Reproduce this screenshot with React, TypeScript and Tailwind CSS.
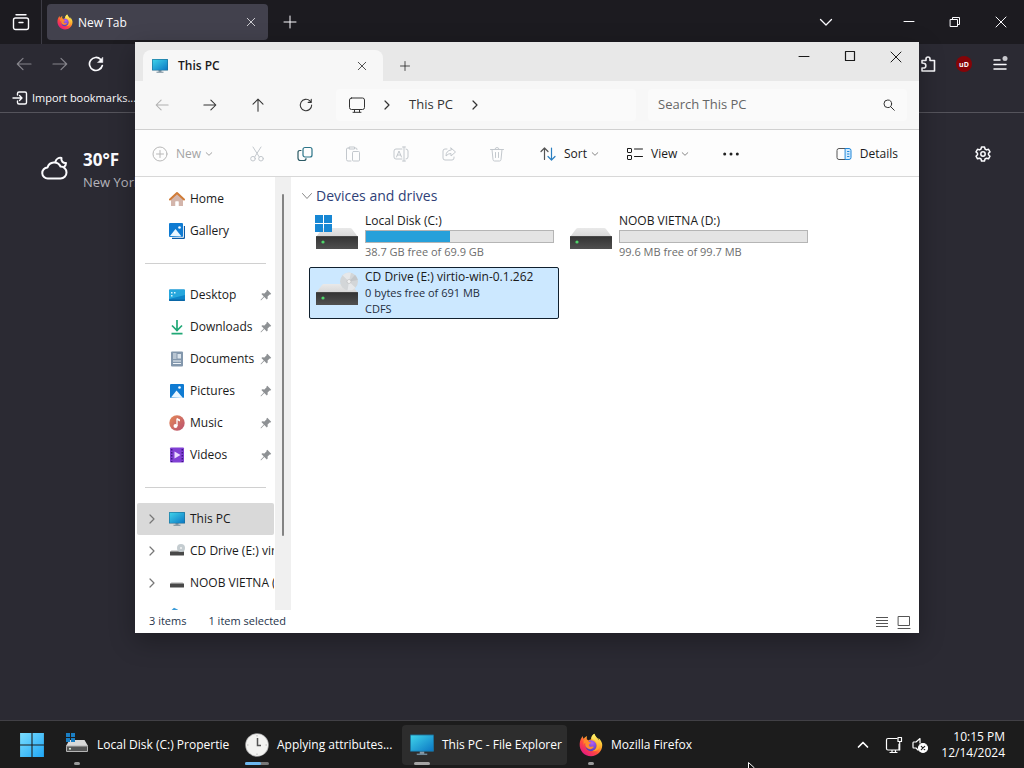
import type { ReactNode } from "react";
import { clsx } from "clsx";

type IconProps = { className?: string };

function Line({
  className = "size-4",
  box = 16,
  width = 1,
  children,
}: {
  className?: string;
  box?: number;
  width?: number;
  children: ReactNode;
}) {
  return (
    <svg
      className={clsx("shrink-0", className)}
      viewBox={`0 0 ${box} ${box}`}
      fill="none"
      stroke="currentColor"
      strokeWidth={width}
      strokeLinecap="round"
      strokeLinejoin="round"
      aria-hidden="true"
    >
      {children}
    </svg>
  );
}

const Close = ({ className }: IconProps) => (
  <Line className={className}><path d="M3 3l10 10M13 3L3 13" /></Line>
);
const Plus = ({ className }: IconProps) => (
  <Line className={className}><path d="M8 2v12M2 8h12" /></Line>
);
const Back = ({ className, width = 1.2 }: IconProps & { width?: number }) => (
  <Line className={className} width={width}><path d="M15 8H1.500M7 2.300L1.300 8 7 13.700" /></Line>
);
const Forward = ({ className, width = 1.2 }: IconProps & { width?: number }) => (
  <Line className={className} width={width}><path d="M1 8h13.500M9 2.300L14.700 8 9 13.700" /></Line>
);
const ChevronDown = ({ className }: IconProps) => (
  <Line className={className} box={8}><path d="M1.200 2.700L4 5.300l2.800-2.600" /></Line>
);
const ChevronRight = ({ className, width = 1.2 }: IconProps & { width?: number }) => (
  <Line className={className} box={10} width={width}><path d="M3 1l4 4-4 4" /></Line>
);

function FirefoxLogo({ className }: IconProps) {
  return (
    <svg className={clsx("shrink-0", className)} viewBox="0 0 32 32" aria-hidden="true">
      <defs>
        <linearGradient id="fxBody" x1="26" y1="3" x2="6" y2="29" gradientUnits="userSpaceOnUse">
          <stop offset="0.050" stopColor="#fff44f" />
          <stop offset="0.350" stopColor="#ffa52a" />
          <stop offset="0.620" stopColor="#ff4a3d" />
          <stop offset="1" stopColor="#e31587" />
        </linearGradient>
        <radialGradient id="fxGlobe" cx="0.600" cy="0.250" r="0.800">
          <stop offset="0" stopColor="#b45cf5" />
          <stop offset="1" stopColor="#4a3fb5" />
        </radialGradient>
        <linearGradient id="fxFlame" x1="20" y1="1" x2="27" y2="24" gradientUnits="userSpaceOnUse">
          <stop offset="0" stopColor="#fff56a" />
          <stop offset="1" stopColor="#ff9a1f" />
        </linearGradient>
      </defs>
      <path
        fill="url(#fxBody)"
        d="M30 12c-1-2.400-2.800-4.300-4.500-5.300 1 1.700 1.400 3 1.600 4C25 6.300 21.500 4.500 20.400 1c-3 1.700-4.200 5-4 7.300-1.600.1-3 .7-4.100 1.600-.6-.5-1.200-.9-1.800-1.100-.4-1.600-.3-3.200.2-4.700-2 .9-3.500 2.300-4.600 3.700C5.300 6.800 5 5.200 5.100 4 3 6.200 1.200 10 .9 14.200.3 23.500 7.400 31 16 31c8.300 0 15-6.700 15-15 0-1.400-.4-2.800-1-4z"
      />
      <circle cx="16" cy="17" r="7.300" fill="url(#fxGlobe)" />
      <path
        fill="url(#fxFlame)"
        d="M20.400 1c-3 1.700-4.200 5-4 7.300 4.600 0 7.800 3.600 7.800 7.800 0 3.700-2.500 7-6.400 8 6.800 1 10.800-4 10.400-9.700-.3-5-6-7.200-7.800-13.400z"
      />
      <path
        fill="#ff8a2b"
        d="M6.300 9.500c2-1.300 4.300-1 6 .4.600 2 2 2.300 4 2.500-.2 1.700-2.500 2-3 3.200-.5 1.500 1.200 3.200 3.500 2.700 1.500-.4 2.600-.2 3 .5-1.800 3-6.300 3.800-9.500 1-2-1.900-2.500-4.600-1.500-6.900-1.300.2-2.200 1.500-2.800 3z"
      />
    </svg>
  );
}

function WindowsLogo({ className }: IconProps) {
  return (
    <svg className={clsx("shrink-0", className)} viewBox="0 0 24 24" aria-hidden="true">
      <defs>
        <linearGradient id="win" x1="0" y1="0" x2="24" y2="24" gradientUnits="userSpaceOnUse">
          <stop offset="0" stopColor="#7fe0ff" />
          <stop offset="1" stopColor="#1ba4f5" />
        </linearGradient>
      </defs>
      <path fill="url(#win)" d="M1 1h10.500v10.500H1zM12.500 1H23v10.500H12.500zM1 12.500h10.500V23H1zM12.500 12.500H23V23H12.500z" />
    </svg>
  );
}

function Monitor({ className }: IconProps) {
  return (
    <svg className={clsx("shrink-0", className)} viewBox="0 0 16 16" aria-hidden="true">
      <defs>
        <linearGradient id="screen" x1="0" y1="0" x2="1" y2="1">
          <stop offset="0" stopColor="#3fd3ea" />
          <stop offset="1" stopColor="#0c78c4" />
        </linearGradient>
      </defs>
      <path fill="#8a9aa6" d="M6.500 12h3v2h-3z" />
      <path fill="#6f8797" d="M4.500 13.700h7v1h-7z" />
      <rect x="0" y="1" width="16" height="11.500" rx="0.600" fill="#1c6c94" />
      <rect x="0.600" y="1.600" width="14.800" height="10.300" fill="url(#screen)" />
    </svg>
  );
}

function Drive({ className, mark }: IconProps & { mark?: "windows" | "disc" }) {
  return (
    <svg className={clsx("shrink-0", className)} viewBox="0 0 44 36" aria-hidden="true">
      <defs>
        <linearGradient id="driveTop" x1="0" y1="0" x2="0" y2="1">
          <stop offset="0" stopColor="#e9e9e9" />
          <stop offset="1" stopColor="#d6d6d6" />
        </linearGradient>
        <linearGradient id="driveFace" x1="0" y1="0" x2="0" y2="1">
          <stop offset="0" stopColor="#333" />
          <stop offset="1" stopColor="#505050" />
        </linearGradient>
      </defs>
      <path d="M1 23l6-8q.700-1 2-1h26q1.300 0 2 1l6 8z" fill="url(#driveTop)" />
      <rect x="1" y="22" width="42" height="13" rx="0.600" fill="url(#driveFace)" />
      <path d="M1 22.500h42" stroke="#555" strokeWidth="0.600" />
      <circle cx="8" cy="28" r="1.600" fill="#4fd66a" />
      {mark === "windows" && (
        <path fill="#1787d4" d="M0 1h8v8H0zM9 1h8v8H9zM0 10h8v8H0zM9 10h8v8H9z" />
      )}
      {mark === "disc" && (
        <g>
          <circle cx="34" cy="11.500" r="9" fill="#d3d6d8" />
          <path d="M34 11.500L27.500 5.300A9 9 0 0 1 36 2.700zM34 11.500l6.500 6.200a9 9 0 0 1-8 2.700z" fill="#e6e8ea" />
          <path d="M34 11.500l8.900-1.400a9 9 0 0 0-3-5.200z" fill="#c3c6c9" />
          <circle cx="34" cy="11.500" r="2" fill="#f2f2f2" stroke="#bbb" strokeWidth="0.600" />
        </g>
      )}
    </svg>
  );
}

function SmallDrive({ disc }: { disc?: boolean }) {
  return (
    <svg className="size-4 shrink-0" viewBox="0 0 16 16" aria-hidden="true">
      <path d="M1 9l1.500-2h11L15 9z" fill="#d5d5d5" />
      <rect x="1" y="8.500" width="14" height="4" rx="0.500" fill="#484848" />
      {disc && <circle cx="12" cy="5" r="4" fill="#c4ccd0" />}
      {disc && <circle cx="12" cy="5" r="1" fill="#f5f5f5" />}
    </svg>
  );
}

function TaskDrive() {
  return (
    <svg className="size-6 shrink-0" viewBox="0 0 24 24" aria-hidden="true">
      <path d="M1 13l3.500-6h15L23 13z" fill="#d9d9d9" />
      <rect x="1" y="12.500" width="22" height="6.500" rx="1" fill="#b5b5b5" />
      <rect x="2" y="13.500" width="20" height="4.500" fill="#555" />
      <circle cx="5" cy="15.700" r="1" fill="#e0f5e4" />
      <path fill="#1a7fc4" d="M1 0h4v4H1zM6 0h4v4H6zM1 5h4v4H1zM6 5h4v4H6z" />
    </svg>
  );
}

function Clock() {
  return (
    <svg className="size-6 shrink-0" viewBox="0 0 24 24" aria-hidden="true">
      <circle cx="12" cy="12" r="11.800" fill="#a9a9a9" />
      <circle cx="12" cy="12" r="11" fill="#f3f3f1" />
      <path d="M12.500 5v7.500H16" fill="none" stroke="#555" strokeWidth="1.500" />
      <path d="M12 2v1.500M12 20.500V22M2 12h1.500M20.500 12H22" stroke="#bbb" />
    </svg>
  );
}

const HomeIcon = () => (
  <svg className="size-4 shrink-0" viewBox="0 0 16 16" aria-hidden="true">
    <path d="M2 7v7.500q0 .5.500.5H6.500v-4.500h3V15h4q.500 0 .500-.500V7L8 2z" fill="#d3b5ab" />
    <path d="M6.500 15v-4.500h3V15z" fill="#fff" />
    <path d="M1 8.500L8 2l7 6.500" fill="none" stroke="#d07c38" strokeWidth="2" strokeLinecap="round" strokeLinejoin="round" />
  </svg>
);
const PictureIcon = ({ stacked }: { stacked?: boolean }) => (
  <svg className="size-4 shrink-0" viewBox="0 0 16 16" aria-hidden="true">
    {stacked && <path d="M3 15.500h11q1.500 0 1.500-1.500V3" fill="none" stroke="#0b5aa5" strokeWidth="1.300" />}
    <rect x={stacked ? 0 : 1} y={stacked ? 0 : 1} width="14" height="14" rx="1" fill="#0f7bd2" />
    <path d={stacked ? "M1 13l5.500-7 6 7.500z" : "M2 14.500l5.500-7 6.500 7.500z"} fill="#e9f6ff" />
    <circle cx="10.500" cy="4.500" r="1.300" fill="#fff" />
  </svg>
);
const DesktopIcon = () => (
  <svg className="size-4 shrink-0" viewBox="0 0 16 16" aria-hidden="true">
    <rect x="0" y="2.500" width="16" height="11.500" rx="1" fill="#0e84c8" />
    <path d="M0 3.500q0-1 1-1h14q1 0 1 1V8L0 12z" fill="#27a7dd" />
    <path d="M2 5h1.500v1.500H2zM2 8h1.500v1.500H2zM5 5h1.500v1.500H5z" fill="#d8f5ff" />
    <path d="M0 12.500h16V13q0 1-1 1H1q-1 0-1-1z" fill="#0a66a6" />
  </svg>
);
const DownloadsIcon = () => (
  <svg className="size-4 shrink-0" viewBox="0 0 16 16" fill="none" stroke="#20a876" aria-hidden="true">
    <path d="M8 1v10M3 6.500L8 11.500l5-5" strokeWidth="1.700" />
    <path d="M2.500 14.700h11" strokeWidth="1.700" />
  </svg>
);
const DocumentsIcon = () => (
  <svg className="size-4 shrink-0" viewBox="0 0 16 16" aria-hidden="true">
    <rect x="2" y="0.500" width="12" height="15" rx="1" fill="#8397ac" />
    <path d="M4 3h3.500M4 5h3.500M4 7h3.500M4 10h8M4 12.500h8" stroke="#eef3f7" />
    <rect x="8.500" y="3" width="3.500" height="4.500" fill="#dbe4ec" />
  </svg>
);
const MusicIcon = () => (
  <svg className="size-4 shrink-0" viewBox="0 0 16 16" aria-hidden="true">
    <defs>
      <linearGradient id="music" x1="0" y1="0" x2="1" y2="1">
        <stop offset="0" stopColor="#e58a58" />
        <stop offset="1" stopColor="#b9506f" />
      </linearGradient>
    </defs>
    <circle cx="8" cy="8" r="7.700" fill="url(#music)" />
    <path d="M8 3.500V11" stroke="#fff" strokeWidth="1.300" />
    <path d="M8 3l3 1.500v2L8 5z" fill="#fff" />
    <circle cx="6.500" cy="11" r="2" fill="#fff" />
  </svg>
);
const VideosIcon = () => (
  <svg className="size-4 shrink-0" viewBox="0 0 16 16" aria-hidden="true">
    <rect x="1" y="0.500" width="14" height="15" rx="1" fill="#8140d4" />
    <path d="M2.700 2v13M13.300 2v13" stroke="#3d1a80" strokeWidth="1.500" strokeDasharray="1.500 1.500" />
    <path d="M5.500 4.500v7l6-3.500z" fill="#ead9ff" />
  </svg>
);
const Pin = () => (
  <svg className="size-3 shrink-0" viewBox="0 0 12 12" fill="#8e9194" aria-hidden="true">
    <path d="M7.300.8l3.900 3.900-.7.800-.8-.1-2.100 2.200.1 2-.9.900L4.300 8 1.200 11.200l-.6.100.1-.6L3.800 7.500 1.400 5.100l.9-.8 2.100.1 2.200-2.200-.1-.7z" />
  </svg>
);

function BrowserButton({ label, className, children }: { label: string; className?: string; children: ReactNode }) {
  return (
    <button type="button" aria-label={label} className={clsx("flex shrink-0 items-center justify-center", className)}>
      {children}
    </button>
  );
}

function Browser() {
  return (
    <div className="flex flex-1 flex-col bg-[#2b2a33] text-[#fbfbfe]">
      <header className="flex h-11 items-center bg-[#1c1b20]">
        <BrowserButton label="Recent browsing" className="h-full w-[42px] border-r border-[#3d3c45]">
          <Line className="size-[18px]" box={18} width={1.4}>
            <path d="M4 1.800h10" />
            <rect x="1.500" y="5" width="15" height="11.500" rx="2" />
            <path d="M7 9.500h4" />
          </Line>
        </BrowserButton>
        <div className="ml-[5px] flex h-9 w-[221px] items-center rounded bg-[#42414d] pr-[9px] pl-[10px]">
          <FirefoxLogo className="size-4" />
          <span className="ml-[5px] flex-1 pt-0.5 text-xs">New Tab</span>
          <BrowserButton label="Close tab" className="size-4">
            <Close className="size-3" />
          </BrowserButton>
        </div>
        <BrowserButton label="Open a new tab" className="h-full w-11">
          <Plus className="size-4" />
        </BrowserButton>
        <div className="ml-auto flex h-full">
          <BrowserButton label="List all tabs" className="mr-[37px] w-[46px]">
            <Line className="size-4" width={1.3}><path d="M2.500 5.500L8 11l5.500-5.500" /></Line>
          </BrowserButton>
          <BrowserButton label="Minimize browser" className="w-[46px]">
            <Line className="size-4"><path d="M3 7.500h10" /></Line>
          </BrowserButton>
          <BrowserButton label="Restore browser" className="w-[46px]">
            <Line className="size-4"><path d="M3.500 5.500h7v7h-7zM5.500 5.500v-2h7v7h-2" /></Line>
          </BrowserButton>
          <BrowserButton label="Close browser" className="w-[46px]">
            <Close className="size-4" />
          </BrowserButton>
        </div>
      </header>

      <nav className="border-b border-[#55545c]" aria-label="Browser toolbar">
        <div className="flex h-10 items-center px-1.5">
          <BrowserButton label="Go back" className="w-9 text-[#85848b]"><Back className="size-4" /></BrowserButton>
          <BrowserButton label="Go forward" className="w-9 text-[#85848b]"><Forward className="size-4" /></BrowserButton>
          <BrowserButton label="Reload page" className="w-9">
            <Line className="size-4" width={1.7}>
              <path d="M14.300 9.500A6.500 6.500 0 1 1 12.700 3.500" />
              <path d="M14.800 1.500v5h-5z" fill="currentColor" strokeWidth="0.500" />
            </Line>
          </BrowserButton>
          <div className="ml-auto flex">
            <BrowserButton label="Extensions" className="w-9">
              <Line className="size-4" width={1.6}>
                <path d="M2 7V4.500h4V3a2 2 0 0 1 4 0v1.500h4.500V15H2v-3h1.500a2.300 2.300 0 0 0 0-4.700z" />
              </Line>
            </BrowserButton>
            <BrowserButton label="Content blocker" className="w-9">
              <span className="flex size-4 items-center justify-center rounded-full bg-[#850408] text-[7px] leading-none font-bold">uD</span>
            </BrowserButton>
            <BrowserButton label="Application menu" className="w-9">
              <Line className="size-4" width={1.5}>
                <path d="M2 4h6M2 8.500h12M2 13h12" />
                <circle cx="13" cy="2.500" r="2.500" fill="#c9c9ce" stroke="none" />
              </Line>
            </BrowserButton>
          </div>
        </div>
        <div className="flex h-7 items-center px-3">
          <button type="button" className="flex items-center gap-1 text-[11px]">
            <Line className="size-4" width={1.4}>
              <path d="M5.500 5V3.500q0-1.500 1.500-1.500h6q1.500 0 1.500 1.500v9q0 1.500-1.500 1.500H7q-1.500 0-1.500-1.500V11M1 8h9M7.500 5.500L10 8l-2.500 2.500" />
            </Line>
            Import bookmarks...
          </button>
        </div>
      </nav>

      <main className="flex items-start justify-between pt-[33px] pr-[33px] pl-10">
        <section className="flex items-center gap-[15px] pt-0.5" aria-label="Weather">
          <Line className="mb-1 size-7" box={28} width={2}>
            <path d="M8 24.500a5.500 5.500 0 0 1-.5-11 7 7 0 0 1 13-1 6 6 0 0 1 0 12z" />
            <path d="M15.500 7.500a5 5 0 0 1 6-3.500 4 4 0 0 0 4.500 5 5 5 0 0 1-2 4" />
          </Line>
          <div>
            <p className="text-[17px] leading-6 font-bold">30°F</p>
            <p className="text-[13px] leading-5 text-[#b5b4bb]">New York City</p>
          </div>
        </section>
        <BrowserButton label="Personalize new tab" className="size-4">
          <Line className="size-4" width={1.5}>
            <path d="M6.500 1h3l.5 2 1.500.9 2-.6 1.500 2.600L13.500 7.300v1.500L15 10.200l-1.500 2.600-2-.6-1.500.8-.5 2h-3L6 13l-1.500-.8-2 .6L1 10.200l1.500-1.400V7.300L1 5.900l1.500-2.600 2 .6L6 3z" />
            <circle cx="8" cy="8" r="2.200" />
          </Line>
        </BrowserButton>
      </main>
    </div>
  );
}

type NavEntry = { id: string; label?: string; icon: ReactNode; pinned?: boolean; expands?: boolean; active?: boolean };

const topPlaces: NavEntry[] = [
  { id: "home", label: "Home", icon: <HomeIcon /> },
  { id: "gallery", label: "Gallery", icon: <PictureIcon stacked /> },
];
const pinnedPlaces: NavEntry[] = [
  { id: "desktop", label: "Desktop", icon: <DesktopIcon />, pinned: true },
  { id: "downloads", label: "Downloads", icon: <DownloadsIcon />, pinned: true },
  { id: "documents", label: "Documents", icon: <DocumentsIcon />, pinned: true },
  { id: "pictures", label: "Pictures", icon: <PictureIcon />, pinned: true },
  { id: "music", label: "Music", icon: <MusicIcon />, pinned: true },
  { id: "videos", label: "Videos", icon: <VideosIcon />, pinned: true },
];
const devices: NavEntry[] = [
  { id: "pc", label: "This PC", icon: <Monitor className="size-4" />, expands: true, active: true },
  { id: "cd", label: "CD Drive (E:) virtio-win-0.1.262", icon: <SmallDrive disc />, expands: true },
  { id: "noob", label: "NOOB VIETNA (D:)", icon: <SmallDrive />, expands: true },
  {
    id: "network",
    icon: (
      <svg className="size-4 shrink-0" viewBox="0 0 16 16" aria-hidden="true">
        <path d="M1 4.500L5 .8l4 2v2z" fill="#3a9bd8" />
        <rect x="1" y="5" width="14" height="8" fill="#3a9bd8" />
      </svg>
    ),
  },
];

function NavList({ entries }: { entries: NavEntry[] }) {
  return (
    <ul>
      {entries.map((e) => (
        <li key={e.id}>
          <a
            href="#"
            aria-label={e.label ?? "Network"}
            className={clsx(
              "ml-0.5 flex h-8 items-center overflow-hidden rounded-xs pr-0.5 pl-2.5 text-xs whitespace-nowrap text-[#1a1a1a]",
              e.active && "bg-[#d9d9d9]",
            )}
          >
            <span className="flex w-[22px] shrink-0 text-[#777]">
              {e.expands && <ChevronRight className="size-2.5" />}
            </span>
            {e.icon}
            {e.label && <span className="ml-[5px] flex-1">{e.label}</span>}
            {e.pinned && <Pin />}
          </a>
        </li>
      ))}
    </ul>
  );
}

const Divider = () => <div className="mr-2 ml-2.5 flex h-8 items-center"><hr className="w-full border-[#d0d0d0]" /></div>;

type DriveInfo = {
  name: string;
  mark?: "windows" | "disc";
  used?: number;
  lines: string[];
  selected?: boolean;
};

const drives: DriveInfo[] = [
  { name: "Local Disk (C:)", mark: "windows", used: 45, lines: ["38.7 GB free of 69.9 GB"] },
  { name: "NOOB VIETNA (D:)", used: 0, lines: ["99.6 MB free of 99.7 MB"] },
  { name: "CD Drive (E:) virtio-win-0.1.262", mark: "disc", lines: ["0 bytes free of 691 MB", "CDFS"], selected: true },
];

function DriveTile({ drive }: { drive: DriveInfo }) {
  return (
    <li
      className={clsx(
        "flex h-[52px] gap-1.5 rounded-xs border px-[5px] pt-px",
        drive.selected ? "border-[#10202e] bg-[#cce8ff]" : "border-transparent",
      )}
    >
      <Drive className="mt-px h-9 w-11" mark={drive.mark} />
      <div className="min-w-0 flex-1">
        <p className="text-xs leading-4 text-[#1a1a1a]">{drive.name}</p>
        {drive.used !== undefined && (
          <div className="my-px h-[13px] w-[189px] border border-[#b5b5b5] bg-[#e4e4e4]">
            <div className="h-full bg-[#26a0da]" style={{ width: `${drive.used}%` }} />
          </div>
        )}
        {drive.lines.map((line) => (
          <p key={line} className={clsx("text-[11px] leading-4", drive.selected ? "text-[#1f2d3d]" : "text-[#6d6d6d]")}>
            {line}
          </p>
        ))}
      </div>
    </li>
  );
}

function Tool({ label, muted, children }: { label: string; muted?: boolean; children: ReactNode }) {
  return (
    <button
      type="button"
      aria-label={label}
      className={clsx("flex h-8 w-12 items-center justify-center", muted ? "text-[#c3c8cd]" : "text-[#333]")}
    >
      {children}
    </button>
  );
}

function Explorer() {
  return (
    <section
      aria-label="This PC"
      className="absolute top-[42px] left-[135px] flex h-[591px] w-[784px] flex-col bg-white text-[#1a1a1a] shadow-[0_8px_24px_rgba(0,0,0,0.3)]"
    >
      <header className="flex h-[39px] items-end bg-[#e8e8e8] pl-2">
        <div className="flex h-[31px] w-60 items-center rounded-t-lg bg-[#f7f7f7] pr-[13px] pl-[9px]">
          <Monitor className="size-4" />
          <span className="ml-2.5 flex-1 text-xs font-semibold">This PC</span>
          <button type="button" aria-label="Close tab" className="flex size-4 items-center justify-center">
            <Close className="size-3" />
          </button>
        </div>
        <button type="button" aria-label="New tab" className="flex h-[31px] w-11 items-center justify-center">
          <Plus className="size-3" />
        </button>
        <div className="ml-auto flex h-[30px] self-start">
          <button type="button" aria-label="Minimize" className="flex w-[46px] items-center justify-center">
            <Line className="size-4"><path d="M3 7.500h10" /></Line>
          </button>
          <button type="button" aria-label="Maximize" className="flex w-[46px] items-center justify-center">
            <Line className="size-4"><path d="M3.500 2.500h9v9h-9z" strokeWidth="1.200" /></Line>
          </button>
          <button type="button" aria-label="Close" className="flex w-[46px] items-center justify-center">
            <Close className="size-4" />
          </button>
        </div>
      </header>

      <div className="flex h-[49px] items-center border-b border-[#d0d0d0] bg-[#f7f7f7] pr-3 pl-[3px] text-[#333]">
        <button type="button" aria-label="Back" className="flex w-12 justify-center text-[#b0b0b0]">
          <Back className="size-3.5" />
        </button>
        <button type="button" aria-label="Forward" className="flex w-12 justify-center">
          <Forward className="size-3.5" />
        </button>
        <button type="button" aria-label="Up" className="flex w-12 justify-center">
          <Line className="size-3.5" width={1.2}><path d="M8 15V1.500M2.300 7L8 1.300 13.700 7" /></Line>
        </button>
        <button type="button" aria-label="Refresh" className="flex w-12 justify-center">
          <Line className="size-3.5" width={1.2}><path d="M14.500 8a6.500 6.500 0 1 1-2-4.700L14 5M14 1.500V5h-3.500" /></Line>
        </button>
        <div className="ml-1.5 flex h-8 w-[300px] items-center rounded bg-[#fafafa] pl-3">
          <Line className="size-[18px]" box={18}>
            <rect x="1.500" y="2" width="15" height="11.500" rx="2" />
            <path d="M6.500 13.500v2.500M11.500 13.500v2.500M5 16.300h8" />
          </Line>
          <ChevronRight className="ml-4 size-2.5" />
          <span className="ml-[17px] text-[13px]">This PC</span>
          <ChevronRight className="ml-[17px] size-2.5" />
        </div>
        <div className="ml-3 flex h-8 min-w-0 flex-1 items-center rounded bg-[#fafafa] pr-3 pl-2.5">
          <input
            type="search"
            aria-label="Search This PC"
            placeholder="Search This PC"
            className="min-w-0 flex-1 bg-transparent text-[13px] outline-none placeholder:text-[#666]"
          />
          <Line className="size-3" box={12}>
            <circle cx="4.800" cy="4.800" r="3.800" />
            <path d="M7.600 7.600l3.700 3.700" />
          </Line>
        </div>
      </div>

      <div className="flex h-[47px] items-center border-b border-[#d8d8d8] bg-[#fdfdfd] pt-0.5 pr-[13px] text-xs">
        <button type="button" className="flex h-8 w-[98px] items-center pl-[17px] text-[#a3a3a3]">
          <Line className="size-4 text-[#b8b8b8]"><circle cx="8" cy="8" r="7" /><path d="M8 4.500v7M4.500 8h7" /></Line>
          <span className="ml-2">New</span>
          <ChevronDown className="ml-1 size-2" />
        </button>
        <Tool label="Cut" muted>
          <Line>
            <path d="M4 1l6.300 10M12 1L5.700 11" />
            <circle cx="4" cy="12.700" r="2.300" />
            <circle cx="12" cy="12.700" r="2.300" />
          </Line>
        </Tool>
        <Tool label="Copy">
          <Line width={1.2}>
            <rect x="6" y="1.500" width="9" height="9.500" rx="2" stroke="#2b7488" />
            <path d="M4 4.500H3q-2 0-2 2V12q0 2.500 2.500 2.500H7q2 0 2-2" stroke="#2b5a64" />
          </Line>
        </Tool>
        <Tool label="Paste" muted>
          <Line>
            <path d="M6 15H3q-1.500 0-1.500-1.500V3Q1.500 2 3 2h1.500M9.500 2H11q1 0 1 1.500M4.500 1h5v2h-5z" />
            <rect x="7.500" y="5.500" width="7" height="9.500" rx="1" />
          </Line>
        </Tool>
        <Tool label="Rename" muted>
          <Line>
            <path d="M9 3H3Q1 3 1 5v6q0 2 2 2h6M13 3q2 0 2 2v6q0 2-2 2M11 1v14M9.500 1h3M9.500 15h3M3.500 11L6 5l2.500 6M4.300 9h3.400" />
          </Line>
        </Tool>
        <Tool label="Share" muted>
          <Line>
            <path d="M6 3H4Q2 3 2 5v7q0 2 2 2h7q2 0 2-2v-1M10 2l4.500 4L10 10V7.500Q7 7.500 5 10q0-5.500 5-6z" />
          </Line>
        </Tool>
        <Tool label="Delete" muted>
          <Line>
            <path d="M1.500 3.500h13M6 3.500Q6 1.500 8 1.500t2 2M3 3.500l1 10q.2 1.500 1.500 1.500h5q1.300 0 1.500-1.500l1-10M6.500 6.500v5M9.500 6.500v5" />
          </Line>
        </Tool>
        <button type="button" className="ml-[11px] flex h-8 w-[86px] items-center pl-2">
          <Line width={1.2}>
            <path d="M4.500 13.500V2M1 5.500L4.500 2 8 5.500" stroke="#555" />
            <path d="M11.500 2v12M8 10.500l3.500 3.500 3.500-3.500" stroke="#2b7fc0" />
          </Line>
          <span className="ml-2">Sort</span>
          <ChevronDown className="ml-1 size-2 text-[#888]" />
        </button>
        <button type="button" className="flex h-8 w-[89px] items-center pl-2">
          <Line className="h-4 w-[18px]">
            <rect x="0.500" y="2.500" width="4" height="4" rx="0.500" />
            <rect x="0.500" y="9.500" width="4" height="4" rx="0.500" />
            <path d="M7.500 3h8M7.500 10.500h8" />
          </Line>
          <span className="ml-[7px]">View</span>
          <ChevronDown className="ml-1 size-2 text-[#888]" />
        </button>
        <Tool label="See more">
          <svg className="h-1 w-4" viewBox="0 0 16 4" fill="#222" aria-hidden="true">
            <circle cx="1.700" cy="2" r="1.500" /><circle cx="8" cy="2" r="1.500" /><circle cx="14.300" cy="2" r="1.500" />
          </svg>
        </Tool>
        <button type="button" className="ml-auto flex h-8 items-center gap-2 px-2">
          <Line>
            <path d="M9.500 2.500H3q-2 0-2 2v7q0 2 2 2h6.500" stroke="#555" />
            <path d="M9.500 2.500H13q2 0 2 2v7q0 2-2 2H9.500zM11.500 5.500h1.500M11.500 8h1.500M11.500 10.500h1.500" stroke="#1f86d8" fill="#d4ecff" />
          </Line>
          Details
        </button>
      </div>

      <div className="flex min-h-0 flex-1">
        <nav className="w-[139px] shrink-0 overflow-hidden pt-1.5" aria-label="Folders">
          <NavList entries={topPlaces} />
          <Divider />
          <NavList entries={pinnedPlaces} />
          <Divider />
          <NavList entries={devices} />
        </nav>
        <div className="ml-px flex w-4 shrink-0 justify-center bg-[#f0f0f0] pt-[17px]">
          <div className="h-[342px] w-0.5 rounded-full bg-[#838383]" />
        </div>
        <main className="min-w-0 flex-1 px-[18px] pt-2">
          <h2 className="-ml-2 flex h-[22px] items-center gap-[3px] text-sm text-[#2f3f78]">
            <Line className="size-3" box={12}><path d="M1.500 3.500L6 8.500l4.500-5" stroke="#888" /></Line>
            Devices and drives
          </h2>
          <ul className="mt-1 grid grid-cols-[250px_250px] gap-1">
            {drives.map((d) => <DriveTile key={d.name} drive={d} />)}
          </ul>
        </main>
      </div>

      <footer className="flex h-[23px] items-center pr-[7px] pl-3.5 text-[11px] text-[#26344a]">
        <span>3 items</span>
        <span className="ml-[22px]">1 item selected</span>
        <div className="ml-auto flex gap-1.5 text-[#555]">
          <button type="button" aria-label="Details view">
            <Line><path d="M2 3.500h12M2 6.500h12M2 9.500h12M2 12.500h12" strokeLinecap="butt" /></Line>
          </button>
          <button type="button" aria-label="Large icons view">
            <Line><path d="M2.500 2.500h11v9h-11zM2 14.500h12" /></Line>
          </button>
        </div>
      </footer>
    </section>
  );
}

type Task = { label: string; icon: ReactNode; width: string; active?: boolean; indicator: ReactNode };

const dot = <span className="h-[3px] w-1.5 rounded-full bg-[#9a9a9a]" />;

const tasks: Task[] = [
  { label: "Local Disk (C:) Propertie", icon: <TaskDrive />, width: "w-[176px]", indicator: dot },
  {
    label: "Applying attributes...",
    icon: <Clock />,
    width: "w-[161px]",
    indicator: (
      <span className="flex h-[3px] w-6 rounded-full bg-[#777]">
        <span className="w-4 rounded-full bg-[#6cb8f0]" />
      </span>
    ),
  },
  {
    label: "This PC - File Explorer",
    icon: <Monitor className="size-6" />,
    width: "w-[165px]",
    active: true,
    indicator: <span className="h-[3px] w-4 rounded-full bg-[#a5a5a5]" />,
  },
  { label: "Mozilla Firefox", icon: <FirefoxLogo className="size-6" />, width: "w-[128px]", indicator: dot },
];

function Taskbar() {
  return (
    <footer className="flex h-12 shrink-0 items-center border-t border-[#414045] bg-[#1c1c1c] pl-2 text-xs text-white">
      <button type="button" aria-label="Start" className="flex w-12 justify-center">
        <WindowsLogo className="size-[26px]" />
      </button>
      <div className="ml-px flex gap-1">
        {tasks.map((t) => (
          <button
            key={t.label}
            type="button"
            className={clsx(
              "flex h-10 items-center gap-2 rounded pl-2 whitespace-nowrap",
              t.width,
              t.active && "bg-[#2d2d2d]",
            )}
          >
            <span className="relative flex h-full w-6 items-center">
              {t.icon}
              <span className="absolute inset-x-0 bottom-0 flex justify-center">{t.indicator}</span>
            </span>
            {t.label}
          </button>
        ))}
      </div>
      <div className="ml-auto flex items-center pr-[19px]">
        <button type="button" aria-label="Show hidden icons" className="mr-3.5">
          <Line width={1.7}><path d="M3.500 10L8 5.500l4.500 4.500" /></Line>
        </button>
        <button type="button" aria-label="Network and volume" className="flex gap-2">
          <Line className="size-[18px]" box={18} width={1.2}>
            <path d="M12 2.500H3Q1.500 2.500 1.500 4v8.500Q1.500 14 3 14h11v-6M5 16.500h7M7 14v2.500M10.500 14v2.500" />
            <path d="M13 1.500h3.500v4H13zM14.700 5.500V14" />
          </Line>
          <Line className="size-[18px]" box={18} width={1.2}>
            <path d="M9 7V2.500L5 6H2.500Q2 6 2 7v4q0 1 .5 1H5l2 2" />
            <circle cx="12" cy="12" r="4.500" fill="#fff" />
            <path d="M10.300 10.300l3.400 3.400M13.700 10.300l-3.400 3.400" stroke="#222" />
          </Line>
        </button>
        <time className="ml-3 text-right leading-4" dateTime="2024-12-14T22:15">
          10:15 PM
          <br />
          12/14/2024
        </time>
      </div>
    </footer>
  );
}

export default function App() {
  return (
    <div className="relative flex min-h-screen flex-col overflow-hidden font-['Open_Sans','Noto_Sans',sans-serif]">
      <Browser />
      <Taskbar />
      <Explorer />
      <svg className="absolute top-[762px] left-[748px] h-1.5 w-2" viewBox="0 0 8 6" aria-hidden="true">
        <path d="M.500 6V.500L6.500 6" fill="#111" stroke="#fff" />
      </svg>
    </div>
  );
}
